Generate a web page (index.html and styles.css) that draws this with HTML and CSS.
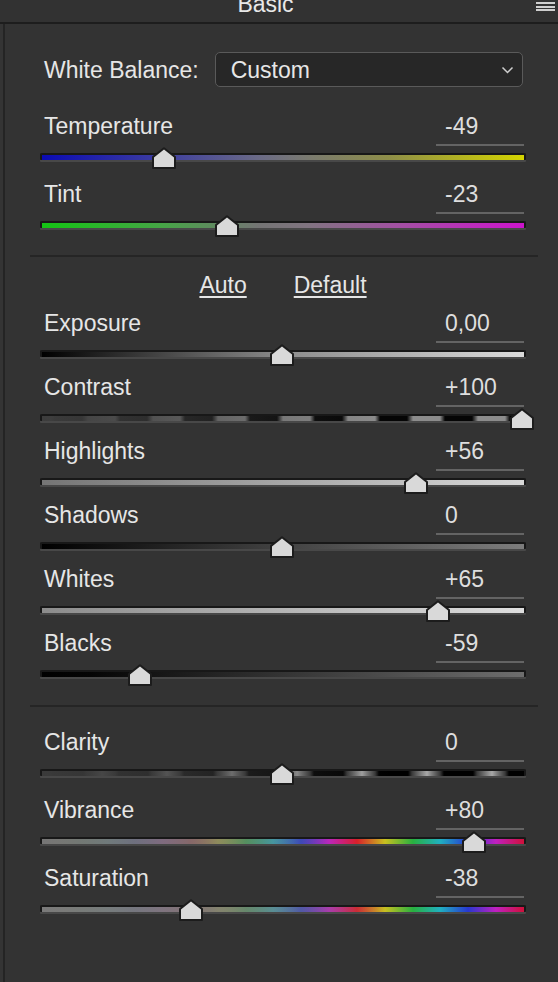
FILE: index.html
```html
<!DOCTYPE html>
<html lang="en">
<head>
<meta charset="utf-8">
<title>Basic</title>
<link rel="stylesheet" href="styles.css">
</head>
<body>
<div class="app">
  <header class="header">
    <div class="title">Basic</div>
    <div class="menu"><span></span><span></span><span></span></div>
  </header>
  <main class="panel">
    <div class="wb">
      <span class="wb-label">White Balance:</span>
      <div class="select">
        <span>Custom</span>
        <svg class="chev" viewBox="0 0 13 8" width="13" height="8"><polyline points="1.5,1.5 6.5,6.5 11.5,1.5"/></svg>
      </div>
    </div>

    <section class="group group-a">
      <div class="row">
        <div class="row-head"><span class="label">Temperature</span><span class="value">-49</span></div>
        <div class="track t-temp"><svg class="thumb" style="left:110.4px" viewBox="0 0 24 22"><polygon points="12,1.2 23,10 23,21 1,21 1,10"/></svg></div>
      </div>
      <div class="row">
        <div class="row-head"><span class="label">Tint</span><span class="value">-23</span></div>
        <div class="track t-tint"><svg class="thumb" style="left:172.8px" viewBox="0 0 24 22"><polygon points="12,1.2 23,10 23,21 1,21 1,10"/></svg></div>
      </div>
    </section>

    <div class="sep sep-a"></div>

    <div class="links"><a class="link">Auto</a><a class="link">Default</a></div>

    <section class="group group-b">
      <div class="row">
        <div class="row-head"><span class="label">Exposure</span><span class="value">0,00</span></div>
        <div class="track t-expo"><svg class="thumb" style="left:228px" viewBox="0 0 24 22"><polygon points="12,1.2 23,10 23,21 1,21 1,10"/></svg></div>
      </div>
      <div class="row">
        <div class="row-head"><span class="label">Contrast</span><span class="value">+100</span></div>
        <div class="track t-contrast"><svg class="thumb" style="left:468px" viewBox="0 0 24 22"><polygon points="12,1.2 23,10 23,21 1,21 1,10"/></svg></div>
      </div>
      <div class="row">
        <div class="row-head"><span class="label">Highlights</span><span class="value">+56</span></div>
        <div class="track t-high"><svg class="thumb" style="left:362.4px" viewBox="0 0 24 22"><polygon points="12,1.2 23,10 23,21 1,21 1,10"/></svg></div>
      </div>
      <div class="row">
        <div class="row-head"><span class="label">Shadows</span><span class="value">0</span></div>
        <div class="track t-shadow"><svg class="thumb" style="left:228px" viewBox="0 0 24 22"><polygon points="12,1.2 23,10 23,21 1,21 1,10"/></svg></div>
      </div>
      <div class="row">
        <div class="row-head"><span class="label">Whites</span><span class="value">+65</span></div>
        <div class="track t-white"><svg class="thumb" style="left:384px" viewBox="0 0 24 22"><polygon points="12,1.2 23,10 23,21 1,21 1,10"/></svg></div>
      </div>
      <div class="row">
        <div class="row-head"><span class="label">Blacks</span><span class="value">-59</span></div>
        <div class="track t-black"><svg class="thumb" style="left:86.4px" viewBox="0 0 24 22"><polygon points="12,1.2 23,10 23,21 1,21 1,10"/></svg></div>
      </div>
    </section>

    <div class="sep sep-b"></div>

    <section class="group group-c">
      <div class="row">
        <div class="row-head"><span class="label">Clarity</span><span class="value">0</span></div>
        <div class="track t-clarity"><svg class="thumb" style="left:228px" viewBox="0 0 24 22"><polygon points="12,1.2 23,10 23,21 1,21 1,10"/></svg></div>
      </div>
      <div class="row">
        <div class="row-head"><span class="label">Vibrance</span><span class="value">+80</span></div>
        <div class="track t-vib"><svg class="thumb" style="left:420px" viewBox="0 0 24 22"><polygon points="12,1.2 23,10 23,21 1,21 1,10"/></svg></div>
      </div>
      <div class="row">
        <div class="row-head"><span class="label">Saturation</span><span class="value">-38</span></div>
        <div class="track t-sat"><svg class="thumb" style="left:136.8px" viewBox="0 0 24 22"><polygon points="12,1.2 23,10 23,21 1,21 1,10"/></svg></div>
      </div>
    </section>
  </main>
</div>
</body>
</html>
```

FILE: styles.css
```css
* { box-sizing: border-box; }

html, body {
  margin: 0;
  padding: 0;
  height: 100%;
}

body {
  background: #343434;
  font-family: "Liberation Sans", Arial, sans-serif;
  font-size: 23px;
  color: #e6e6e6;
  overflow: hidden;
}

.app {
  width: 558px;
  height: 982px;
  display: flex;
  flex-direction: column;
}

/* header */
.header {
  height: 24px;
  flex: none;
  display: flex;
  align-items: flex-start;
  background: #323232;
  border-bottom: 2px solid #1d1d1d;
  overflow: hidden;
}

.title {
  flex: 1;
  text-align: center;
  line-height: 26px;
  margin-top: -9px;
  color: #e8e8e8;
}

.menu {
  width: 27px;
  padding: 2px 3px 0 0;
  display: flex;
  flex-direction: column;
  align-items: flex-end;
  gap: 1.5px;
}

.menu span {
  display: block;
  width: 19px;
  height: 2px;
  background: #cfcfcf;
}

/* panel */
.panel {
  flex: 1;
  margin-left: 3px;
  border-left: 2px solid #242424;
  background: #333333;
  display: flex;
  flex-direction: column;
}

.wb {
  display: flex;
  align-items: center;
  height: 35px;
  margin: 28px 0 0 39px;
}

.wb-label {
  line-height: 26px;
}

.select {
  margin-left: 16px;
  width: 308px;
  height: 35px;
  border: 1.5px solid #5a5a5a;
  border-radius: 5px;
  background: #272727;
  display: flex;
  align-items: center;
  justify-content: space-between;
  padding: 0 8px 0 15px;
  line-height: 26px;
}

.chev polyline {
  fill: none;
  stroke: #cfcfcf;
  stroke-width: 1.5;
}

/* groups */
.group {
  display: flex;
  flex-direction: column;
}

.group-a { margin-top: 26px; }
.group-b { margin-top: 12px; }
.group-c { margin-top: 22px; }

.row {
  height: 68px;
  display: flex;
  flex-direction: column;
}

.group-b .row { height: 64px; }

.row-head {
  display: flex;
  justify-content: space-between;
  align-items: flex-start;
  padding: 0 34px 0 39px;
}

.label {
  line-height: 26px;
  color: #e6e6e6;
}

.value {
  width: 88px;
  padding: 0 0 5px 9px;
  line-height: 26px;
  border-bottom: 2px solid #646464;
  color: #dedede;
}

.sep {
  height: 2px;
  background: #252525;
  margin: 0 20px 0 25px;
}

.sep-a { margin-top: 6px; }
.sep-b { margin-top: 11px; }

.links {
  margin-top: 15px;
  display: flex;
  justify-content: center;
  gap: 47px;
  padding: 0 32px 0 35px;
  line-height: 26px;
}

.link {
  color: #e6e6e6;
  text-decoration: underline;
  text-decoration-thickness: 2px;
  text-underline-offset: 3px;
}

/* tracks */
.track {
  position: relative;
  height: 7px;
  margin: 7px 32px 0 35px;
  border: 2px solid #181818;
  border-bottom: 0;
  border-radius: 2px 2px 1px 1px;
  box-shadow: 0 2px 0 #484848;
}

.thumb {
  position: absolute;
  top: -8px;
  width: 24px;
  height: 22px;
  overflow: visible;
}

.thumb polygon {
  fill: #d9d9d9;
  stroke: #1c1c1c;
  stroke-width: 2;
  stroke-linejoin: round;
}

.t-temp {
  background: linear-gradient(to right, #0b0bb4 0%, #3e3ea0 25%, #6a6a86 45%, #7a7a70 55%, #8e8e48 72%, #d4d400 100%);
}

.t-tint {
  background: linear-gradient(to right, #14c414 0%, #46a446 25%, #747474 45%, #807480 55%, #a44ea4 75%, #cc14cc 100%);
}

.t-expo {
  background: linear-gradient(to right, #000 0%, #8c8c8c 50%, #dadada 100%);
}

.t-contrast {
  background:
    linear-gradient(to right, rgba(60,60,60,1) 0%, rgba(60,60,60,.7) 25%, rgba(60,60,60,.25) 50%, rgba(60,60,60,0) 70%),
    repeating-linear-gradient(to right, #8c8c8c 0px, #8c8c8c 8px, #050505 13px, #050505 40px, #8c8c8c 46px, #8c8c8c 65px);
}

.t-high {
  background: linear-gradient(to right, #757575, #d8d8d8);
}

.t-shadow {
  background: linear-gradient(to right, #000 0%, #3c3c3c 45%, #7c7c7c 100%);
}

.t-white {
  background: linear-gradient(to right, #8c8c8c, #dedede);
}

.t-black {
  background: linear-gradient(to right, #000 0%, #050505 10%, #6e6e6e 100%);
}

.t-clarity {
  background:
    linear-gradient(to right, rgba(58,58,58,1) 0%, rgba(58,58,58,.75) 28%, rgba(58,58,58,.3) 52%, rgba(58,58,58,0) 72%),
    repeating-linear-gradient(to right, #7a7a7a 0px, #3a3a3a 8px, #000 12px, #000 41px, #3a3a3a 45px, #a8a8a8 60px, #7a7a7a 65px);
}

.t-vib {
  background:
    linear-gradient(to right, rgba(118,118,118,1) 0%, rgba(118,118,118,.85) 30%, rgba(118,118,118,.4) 50%, rgba(118,118,118,0) 62%),
    linear-gradient(to right, #d06020 0px, #c8c020 9px, #28b040 37px, #20b0c0 65px, #2838d0 92px, #c020c0 120px, #d8202a 148px, #c8c020 176px, #28b040 204px, #20b0c0 231px, #2838d0 259px, #c020c0 287px, #d8202a 315px, #c8c020 343px, #28b040 371px, #20b0c0 398px, #2838d0 426px, #c020c0 454px, #d0103a 482px);
}

.t-sat {
  background:
    linear-gradient(to right, rgba(122,122,122,1) 0%, rgba(122,122,122,.9) 35%, rgba(122,122,122,.55) 52%, rgba(122,122,122,.15) 65%, rgba(122,122,122,0) 72%),
    linear-gradient(to right, #d06020 0px, #c8c020 9px, #28b040 37px, #20b0c0 65px, #2838d0 92px, #c020c0 120px, #d8202a 148px, #c8c020 176px, #28b040 204px, #20b0c0 231px, #2838d0 259px, #c020c0 287px, #d8202a 315px, #c8c020 343px, #28b040 371px, #20b0c0 398px, #2838d0 426px, #c020c0 454px, #d0103a 482px);
}
```
